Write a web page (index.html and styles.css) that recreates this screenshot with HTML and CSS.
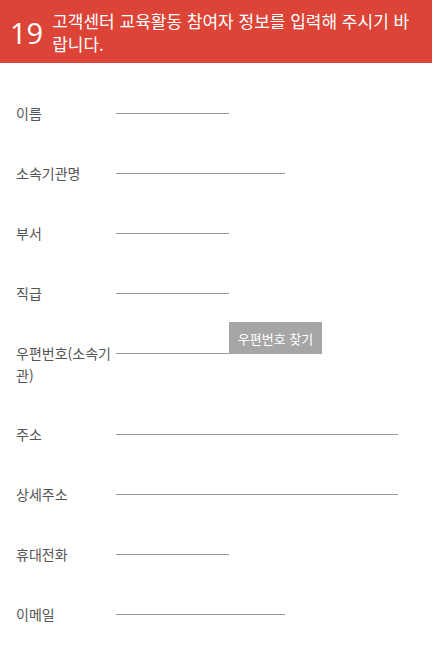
FILE: index.html
```html
<!DOCTYPE html>
<html lang="ko">
<head>
<meta charset="utf-8">
<link rel="stylesheet" href="styles.css">
</head>
<body>
<header class="qhead">
  <div class="qnum">19</div>
  <div class="qtitle">고객센터 교육활동 참여자 정보를 입력해 주시기 바랍니다.</div>
</header>
<form class="form">
  <div class="row"><label class="lbl">이름</label><div class="field"><input class="inp short" type="text"></div></div>
  <div class="row"><label class="lbl">소속기관명</label><div class="field"><input class="inp mid" type="text"></div></div>
  <div class="row"><label class="lbl">부서</label><div class="field"><input class="inp short" type="text"></div></div>
  <div class="row"><label class="lbl">직급</label><div class="field"><input class="inp short" type="text"></div></div>
  <div class="row row-zip"><label class="lbl">우편번호(소속기관)</label><div class="field"><input class="inp short" type="text"><button class="btn" type="button">우편번호 찾기</button></div></div>
  <div class="row"><label class="lbl">주소</label><div class="field"><input class="inp long" type="text"></div></div>
  <div class="row"><label class="lbl">상세주소</label><div class="field"><input class="inp long" type="text"></div></div>
  <div class="row"><label class="lbl">휴대전화</label><div class="field"><input class="inp short" type="text"></div></div>
  <div class="row"><label class="lbl">이메일</label><div class="field"><input class="inp mid" type="text"></div></div>
</form>
</body>
</html>
```
FILE: styles.css
```css
html, body {
  margin: 0;
  padding: 0;
  background: #fff;
}
body {
  font-family: "Noto Sans CJK KR", "Noto Sans", sans-serif;
}
.qhead {
  display: flex;
  align-items: center;
  box-sizing: border-box;
  height: 63px;
  padding: 9px 12px 8px 10px;
  background: #db4437;
  color: #fff;
}
.qnum {
  font-family: "Open Sans", "Noto Sans", sans-serif;
  font-size: 29px;
  line-height: 1;
  margin-right: 9px;
  flex: none;
}
.qtitle {
  font-size: 17px;
  line-height: 23px;
}
.form {
  padding-top: 39px;
}
.row {
  display: flex;
  align-items: flex-start;
  padding-left: 16px;
  margin-bottom: 38px;
}
.row-zip {
  margin-bottom: 37px;
}
.lbl {
  width: 100px;
  flex: none;
  font-size: 14px;
  line-height: 22px;
  color: #555;
}
.field {
  display: flex;
  align-items: flex-end;
  height: 12px;
}
.inp {
  box-sizing: border-box;
  height: 12px;
  padding: 0;
  margin: 0;
  border: 0;
  border-bottom: 1px solid #999;
  background: transparent;
  outline: none;
}
.short { width: 113px; }
.mid { width: 169px; }
.long { width: 282px; }
.btn {
  box-sizing: border-box;
  width: 93px;
  height: 32px;
  margin: 0;
  padding: 0;
  border: 0;
  background: #a6a6a6;
  color: #fff;
  font-family: "Noto Sans CJK KR", sans-serif;
  font-size: 13px;
  flex: none;
}
```
